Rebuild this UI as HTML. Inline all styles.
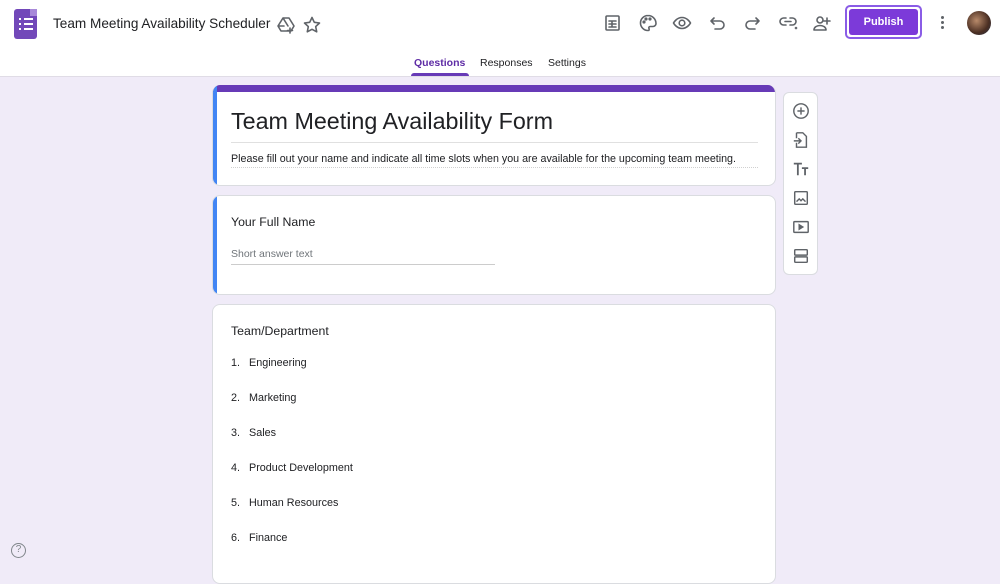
<!DOCTYPE html>
<html><head><meta charset="utf-8"><style>
*{box-sizing:border-box;margin:0;padding:0}
body{width:1000px;height:569px;overflow:hidden;background:#f0ebf8;font-family:"Liberation Sans",Arial,sans-serif;color:#202124;position:relative}
.top{position:absolute;left:0;top:0;width:1000px;height:77px;background:#fff;border-bottom:1px solid #e0dce6}
.abs{position:absolute}
.ic{position:absolute;width:20px;height:20px}
.ic svg{width:20px;height:20px;fill:none;stroke:#5f6368;stroke-width:1.6;stroke-linecap:round;stroke-linejoin:round}
.card{position:absolute;left:212px;width:564px;background:#fff;border-radius:8px;border:1px solid #dadce0}
.tool svg{position:absolute;left:8px;width:18px;height:18px;fill:none;stroke:#5f6368;stroke-width:1.6}
.li{position:absolute;left:231px;font-size:10.8px;color:#202124}
</style></head><body>
<div class="top">
 <div class="abs" style="left:14px;top:9px;width:23px;height:30px;background:#7248b9;border-radius:3px"></div>
 <div class="abs" style="left:30px;top:9px;width:7px;height:7px;background:#a889d9"></div>
 <div class="abs" style="left:19px;top:18px;width:14px;height:12px;background:repeating-linear-gradient(#fff 0 2px,transparent 2px 5px)"></div>
 <div class="abs" style="left:21px;top:18px;width:3px;height:12px;background:#7248b9"></div>
 <div class="abs" style="left:53px;top:16px;font-size:13.6px;color:#202124">Team Meeting Availability Scheduler</div>
 <div class="ic" style="left:276px;top:15px"><svg viewBox="0 0 20 20"><path d="M7 3h6l5 8-3 5H5l-3-5z M7 3l5 8M2 11h6"/><path d="M14 13v5M11.5 15.5h5"/></svg></div>
 <div class="ic" style="left:302px;top:15px"><svg viewBox="0 0 20 20"><path d="M10 2.5l2.3 4.8 5.2.7-3.8 3.6 1 5.2L10 14.3 5.3 16.8l1-5.2L2.5 8l5.2-.7z"/></svg></div>
 <div class="ic" style="left:603px;top:13px"><svg viewBox="0 0 20 20"><rect x="3" y="3" width="13" height="14" rx="1"/><path d="M6 8h7M6 11h7M6 14h7M9 8v6"/></svg></div>
 <div class="ic" style="left:638px;top:13px"><svg viewBox="0 0 20 20"><path d="M10 2.5a7.5 7.5 0 100 15c1.2 0 1.5-1 1-2s0-2 1.2-2H15a3 3 0 003-3c0-4.5-3.7-8-8-8z"/><circle cx="6" cy="9" r=".8"/><circle cx="8" cy="6" r=".8"/><circle cx="12" cy="6" r=".8"/></svg></div>
 <div class="ic" style="left:672px;top:13px"><svg viewBox="0 0 20 20"><path d="M1.5 10s3-5.5 8.5-5.5S18.5 10 18.5 10s-3 5.5-8.5 5.5S1.5 10 1.5 10z"/><circle cx="10" cy="10" r="2.8"/></svg></div>
 <div class="ic" style="left:708px;top:13px"><svg viewBox="0 0 20 20"><path d="M6 5L3 8l3 3M3 8h9a4 4 0 010 8H7"/></svg></div>
 <div class="ic" style="left:742px;top:13px"><svg viewBox="0 0 20 20"><path d="M14 5l3 3-3 3M17 8H8a4 4 0 000 8h5"/></svg></div>
 <div class="ic" style="left:778px;top:12px"><svg viewBox="0 0 20 20"><path d="M8 6H5.5a3.5 3.5 0 000 7H8M12 6h2.5a3.5 3.5 0 010 7H12M7 9.5h6"/><circle cx="18" cy="16" r=".5"/></svg></div>
 <div class="ic" style="left:812px;top:13px"><svg viewBox="0 0 20 20"><circle cx="8" cy="7" r="3"/><path d="M2 17c0-3 3-4.5 6-4.5s6 1.5 6 4.5zM15 5v6M12 8h6"/></svg></div>
 <div class="abs" style="left:845px;top:5px;width:77px;height:34px;border:2px solid #8a5ce6;border-radius:5px;padding:2px"><div style="width:100%;height:26px;background:#7c3ad9;border-radius:3px;color:#fff;font-size:11px;font-weight:bold;text-align:center;line-height:26px">Publish</div></div>
 <div class="abs" style="left:941px;top:16px;width:3px;height:3px;border-radius:50%;background:#5f6368;box-shadow:0 5px 0 #5f6368,0 10px 0 #5f6368"></div>
 <div class="abs" style="left:967px;top:11px;width:24px;height:24px;border-radius:50%;background:radial-gradient(circle at 40% 40%,#b88a6a,#4a2e22 60%,#23324a)"></div>
 <div class="abs" style="left:414px;top:57px;font-size:10.5px;color:#5e2ca5;font-weight:bold">Questions</div>
 <div class="abs" style="left:411px;top:73px;width:58px;height:3px;background:#673ab7;border-radius:3px 3px 0 0"></div>
 <div class="abs" style="left:480px;top:57px;font-size:10.5px;color:#202124">Responses</div>
 <div class="abs" style="left:548px;top:57px;font-size:10.5px;color:#202124">Settings</div>
</div>

<div class="card" style="top:85px;height:101px;overflow:hidden;border-top:none">
 <div class="abs" style="left:0;top:0;width:564px;height:7px;background:#673ab7"></div>
 <div class="abs" style="left:0;top:0;width:4px;height:101px;background:#4285f4"></div>
 <div class="abs" style="left:18px;top:23px;font-size:23.3px;color:#202124">Team Meeting Availability Form</div>
 <div class="abs" style="left:18px;top:57px;width:527px;height:1px;background:#e0e0e0"></div>
 <div class="abs" style="left:18px;top:68px;font-size:10.7px">Please fill out your name and indicate all time slots when you are available for the upcoming team meeting.</div>
 <div class="abs" style="left:18px;top:82px;width:527px;border-top:1px dotted #d0d0d0"></div>
</div>

<div class="card" style="top:195px;height:100px;overflow:hidden">
 <div class="abs" style="left:0;top:0;width:4px;height:100px;background:#4285f4"></div>
 <div class="abs" style="left:18px;top:19px;font-size:12.3px">Your Full Name</div>
 <div class="abs" style="left:18px;top:52px;font-size:10.5px;color:#70757a">Short answer text</div>
 <div class="abs" style="left:18px;top:68px;width:264px;height:1px;background:#ccc"></div>
</div>

<div class="card" style="top:304px;height:280px"></div>
<div class="abs" style="left:231px;top:324px;font-size:12.3px">Team/Department</div>
<div class="li" style="top:357px">1.&nbsp;&nbsp; Engineering</div>
<div class="li" style="top:392px">2.&nbsp;&nbsp; Marketing</div>
<div class="li" style="top:427px">3.&nbsp;&nbsp; Sales</div>
<div class="li" style="top:462px">4.&nbsp;&nbsp; Product Development</div>
<div class="li" style="top:497px">5.&nbsp;&nbsp; Human Resources</div>
<div class="li" style="top:532px">6.&nbsp;&nbsp; Finance</div>

<div class="abs tool" style="left:783px;top:92px;width:35px;height:183px;background:#fff;border:1px solid #dadce0;border-radius:6px">
 <svg viewBox="0 0 20 20" style="top:9px"><circle cx="10" cy="10" r="8"/><path d="M10 6v8M6 10h8"/></svg>
 <svg viewBox="0 0 20 20" style="top:38px"><path d="M5 2h7l4 4v12H5v-5M5 8V2M2 11h8M7 8l3 3-3 3"/></svg>
 <svg viewBox="0 0 20 20" style="top:67px;stroke-width:2"><path d="M2 4h9M6.5 4v13M11 9h7M14.5 9v8"/></svg>
 <svg viewBox="0 0 20 20" style="top:96px"><rect x="3" y="3" width="14" height="14" rx="1"/><path d="M5 14l3-3 2 2 2-2 3 3"/></svg>
 <svg viewBox="0 0 20 20" style="top:125px"><rect x="2" y="4" width="16" height="12" rx="1"/><path d="M8 7.5v5l4-2.5z" style="fill:#5f6368"/></svg>
 <svg viewBox="0 0 20 20" style="top:154px"><rect x="3" y="3" width="14" height="6" rx="1"/><rect x="3" y="11" width="14" height="6" rx="1"/></svg>
</div>

<div class="abs" style="left:11px;top:543px;width:15px;height:15px;border:1.5px solid #80868b;border-radius:50%;font-size:10px;color:#80868b;text-align:center;line-height:12px">?</div>
</body></html>
